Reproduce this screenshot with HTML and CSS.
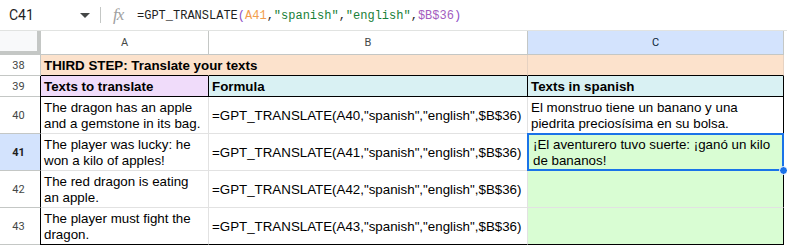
FILE: index.html
```html
<!DOCTYPE html>
<html>
<head>
<meta charset="utf-8">
<link rel="stylesheet" href="styles.css">
</head>
<body>
<div class="fbar">
  <div class="namebox"><span class="ref">C41</span><span class="caret"></span></div>
  <div class="sep"></div>
  <div class="fx">fx</div>
  <div class="ftext"><span class="fn">=GPT_TRANSLATE</span><span class="par">(</span><span class="rng">A41</span>,<span class="str">"spanish"</span>,<span class="str">"english"</span>,<span class="abs">$B$36</span><span class="par">)</span></div>
</div>
<div class="sheet">
  <div class="corner"></div>
  <div class="colh">A</div>
  <div class="colh">B</div>
  <div class="colh sel">C</div>

  <div class="rowh">38</div>
  <div class="c r38 title">THIRD STEP: Translate your texts</div>
  <div class="c r38"></div>
  <div class="c r38 last"></div>

  <div class="rowh">39</div>
  <div class="c r39 hdr lav bl">Texts to translate</div>
  <div class="c r39 hdr cyan">Formula</div>
  <div class="c r39 hdr cyan">Texts in spanish</div>

  <div class="rowh">40</div>
  <div class="c bl"><span>The dragon has an apple<br>and a gemstone in its bag.</span></div>
  <div class="c">=GPT_TRANSLATE(A40,"spanish","english",$B$36)</div>
  <div class="c br"><span>El monstruo tiene un banano y una<br>piedrita preciosísima en su bolsa.</span></div>

  <div class="rowh rsel">41</div>
  <div class="c bl"><span>The player was lucky: he<br>won a kilo of apples!</span></div>
  <div class="c">=GPT_TRANSLATE(A41,"spanish","english",$B$36)</div>
  <div class="c br green active"><span>¡El aventurero tuvo suerte: ¡ganó un kilo<br>de bananos!</span><span class="selbox"></span><span class="handle"></span></div>

  <div class="rowh">42</div>
  <div class="c bl"><span>The red dragon is eating<br>an apple.</span></div>
  <div class="c">=GPT_TRANSLATE(A42,"spanish","english",$B$36)</div>
  <div class="c br green"></div>

  <div class="rowh">43</div>
  <div class="c bl bb"><span>The player must fight the<br>dragon.</span></div>
  <div class="c bb">=GPT_TRANSLATE(A43,"spanish","english",$B$36)</div>
  <div class="c br bb green"></div>
</div>
</body>
</html>
```
FILE: styles.css
```css
* { box-sizing: border-box; }
html, body { margin: 0; padding: 0; background: #fff; }
body { width: 787px; height: 246px; overflow: hidden; font-family: "Liberation Sans", Arial, sans-serif; }

.fbar {
  height: 31px;
  display: flex;
  align-items: center;
  border-bottom: 1px solid #e1e3e1;
  background: #fff;
}
.namebox {
  width: 100px;
  display: flex;
  align-items: center;
  padding-left: 9px;
  font-family: Roboto, "Liberation Sans", sans-serif;
  font-size: 14px;
  color: #1f1f1f;
}
.ref { flex: 1; }
.caret {
  width: 0; height: 0;
  border-left: 5px solid transparent;
  border-right: 5px solid transparent;
  border-top: 5px solid #444746;
  margin-right: 10px;
}
.sep { width: 1px; height: 16px; background: #c4c7c5; }
.fx {
  width: 36px;
  padding-left: 12px;
  font-family: "Liberation Serif", serif;
  font-style: italic;
  font-size: 17px;
  color: #a0a0a0;
  letter-spacing: -1px;
}
.ftext {
  font-family: "Liberation Mono", monospace;
  font-size: 12px;
  color: #1f1f1f;
  padding-top: 1px;
}
.par { color: #8e4ec6; }
.rng { color: #f29d4c; }
.str { color: #188038; }
.abs { color: #a35dc0; }

.sheet {
  display: grid;
  grid-template-columns: 41px 168px 319px 256px;
  grid-template-rows: 24px 21px 21px 37px 37px 37px 37px;
}
.corner {
  background: #f8f9fa;
  border-right: 4px solid #c4c7c5;
  border-bottom: 4px solid #c4c7c5;
}
.colh {
  display: flex;
  align-items: center;
  justify-content: center;
  font-family: Roboto, "Liberation Sans", sans-serif;
  font-size: 11px;
  color: #444746;
  border-right: 1px solid #c4c7c5;
  border-bottom: 1px solid #c4c7c5;
  background: #fff;
}
.colh.sel { background: #d3e3fd; color: #0b1f3a; }
.rowh {
  display: flex;
  align-items: center;
  justify-content: center;
  font-family: Roboto, "Liberation Sans", sans-serif;
  font-size: 11px;
  color: #444746;
  border-right: 1px solid #c4c7c5;
  border-bottom: 1px solid #c4c7c5;
  padding-right: 3px;
}
.rowh.rsel { background: #d3e3fd; color: #1f1f1f; font-weight: bold; }

.c {
  position: relative;
  display: flex;
  align-items: center;
  padding: 2px 3px 0;
  font-size: 13.33px;
  line-height: 16px;
  color: #000;
  white-space: nowrap;
  border-right: 1px solid #e2e2e2;
  border-bottom: 1px solid #e2e2e2;
}
.r38 { background: #fce2cc; border-color: #e6d2c2; border-bottom-color: #000; }
.title { font-weight: bold; overflow: visible; z-index: 1; border-right-color: transparent; }
.r39 { border-bottom-color: #000; border-right-color: #000; }
.hdr { font-weight: bold; }
.lav { background: #f0dcfa; }
.cyan { background: #d9f1f3; }
.bl { border-left: 1px solid #000; margin-left: -1px; }
.br { border-right-color: #000; }
.bb { border-bottom-color: #000; }
.green { background: #d9fdd3; }
.active { padding-left: 5px; }
.selbox {
  position: absolute;
  left: -1px; top: -1px; right: -1px; bottom: -1px;
  border: 2px solid #1a73e8;
  pointer-events: none;
}
.handle {
  position: absolute;
  right: -5px; bottom: -5px;
  width: 9px; height: 9px;
  border-radius: 50%;
  background: #1a73e8;
  border: 1px solid #fff;
  z-index: 2;
}
```
